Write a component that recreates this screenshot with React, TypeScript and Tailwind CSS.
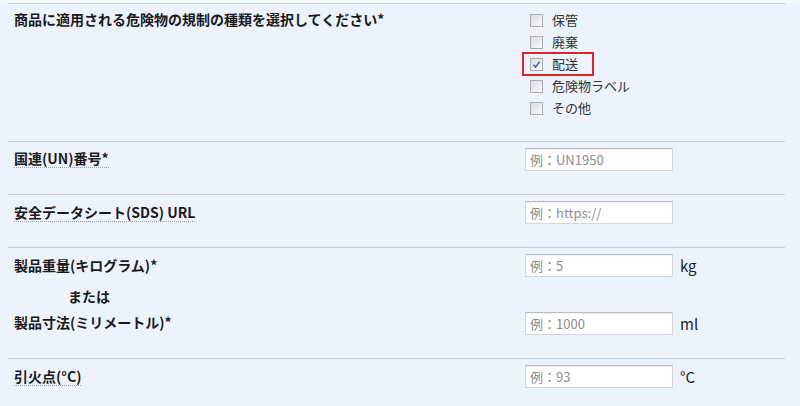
import React from 'react';

const font = { fontFamily: '"Noto Sans CJK JP", "Liberation Sans", sans-serif' };

function Check({ label, checked, mark }: { label: string; checked?: boolean; mark?: boolean }) {
  return (
    <div className="relative flex h-[22px] items-center">
      {mark && (
        <span className="absolute left-[-8px] top-[-1px] h-[24px] w-[72px] border-2 border-[#d9262b]" />
      )}
      <span className="flex h-[13px] w-[13px] items-center justify-center border border-[#a9adb3] bg-gradient-to-br from-[#d8dbe0] to-[#fbfbfc]">
        {checked && (
          <svg width="9" height="9" viewBox="0 0 9 9">
            <path d="M1.5 4.8 L3.6 7 L7.6 1.6" fill="none" stroke="#4a5aa8" strokeWidth="1.5" />
          </svg>
        )}
      </span>
      <span className="ml-[9px] text-[13px] leading-[18px] text-[#333]">{label}</span>
    </div>
  );
}

function Label({ children, dotted = true }: { children: React.ReactNode; dotted?: boolean }) {
  return (
    <span
      className={
        'block w-fit text-[14px] font-bold leading-[18px] text-[#1a1a1a] ' +
        (dotted ? 'border-b border-dotted border-[#9aa3ad]' : '')
      }
    >
      {children}
    </span>
  );
}

function Field({ placeholder, unit }: { placeholder: string; unit?: string }) {
  return (
    <div className="flex items-center">
      <div className="flex h-[23px] w-[148px] items-center border border-[#d3d6da] border-t-[#b9bdc2] bg-white pl-[4px] text-[13px] leading-none text-[#8c8c8c] shadow-[inset_0_1px_1px_rgba(0,0,0,0.06)]">
        {placeholder}
      </div>
      {unit && <span className="ml-[7px] text-[15px] leading-none text-[#222]">{unit}</span>}
    </div>
  );
}

export default function App() {
  return (
    <div className="h-[406px] w-[800px] overflow-hidden bg-[#edf3fc]" style={font}>
      <div className="h-[3px] bg-[#f4f7fc]" />
      <div className="ml-[8px] w-[777px]">
        {/* 規制の種類 */}
        <section className="flex h-[138px] border-t border-[#c6ccd4] pl-[6px]">
          <div className="w-[511px] pt-[6px]">
            <Label dotted={false}>商品に適用される危険物の規制の種類を選択してください*</Label>
          </div>
          <div className="pl-[5px] pt-[5px]">
            <Check label="保管" />
            <Check label="廃棄" />
            <Check label="配送" checked mark />
            <Check label="危険物ラベル" />
            <Check label="その他" />
          </div>
        </section>

        {/* UN番号 */}
        <section className="flex h-[53px] border-t border-[#c6ccd4] pl-[6px]">
          <div className="w-[511px] pt-[7px]">
            <Label>国連(UN)番号*</Label>
          </div>
          <div className="pt-[6px]">
            <Field placeholder="例：UN1950" />
          </div>
        </section>

        {/* SDS */}
        <section className="flex h-[53px] border-t border-[#c6ccd4] pl-[6px]">
          <div className="w-[511px] pt-[8px]">
            <Label>安全データシート(SDS) URL</Label>
          </div>
          <div className="pt-[6px]">
            <Field placeholder="例：https://" />
          </div>
        </section>

        {/* 重量・寸法 */}
        <section className="flex h-[111px] border-t border-[#c6ccd4] pl-[6px]">
          <div className="flex w-[511px] flex-col pt-[8px]">
            <Label dotted={false}>製品重量(キログラム)*</Label>
            <div className="mt-[13px] pl-[54px] text-[14px] font-bold leading-[18px] text-[#1a1a1a]">または</div>
            <div className="mt-[8px]">
              <Label dotted={false}>製品寸法(ミリメートル)*</Label>
            </div>
          </div>
          <div className="flex flex-col pt-[6px]">
            <Field placeholder="例：5" unit="kg" />
            <div className="mt-[35px]">
              <Field placeholder="例：1000" unit="ml" />
            </div>
          </div>
        </section>

        {/* 引火点 */}
        <section className="flex h-[60px] border-t border-[#c6ccd4] pl-[6px]">
          <div className="w-[511px] pt-[8px]">
            <Label>引火点(°C)</Label>
          </div>
          <div className="pt-[6px]">
            <Field placeholder="例：93" unit="°C" />
          </div>
        </section>
      </div>
    </div>
  );
}
